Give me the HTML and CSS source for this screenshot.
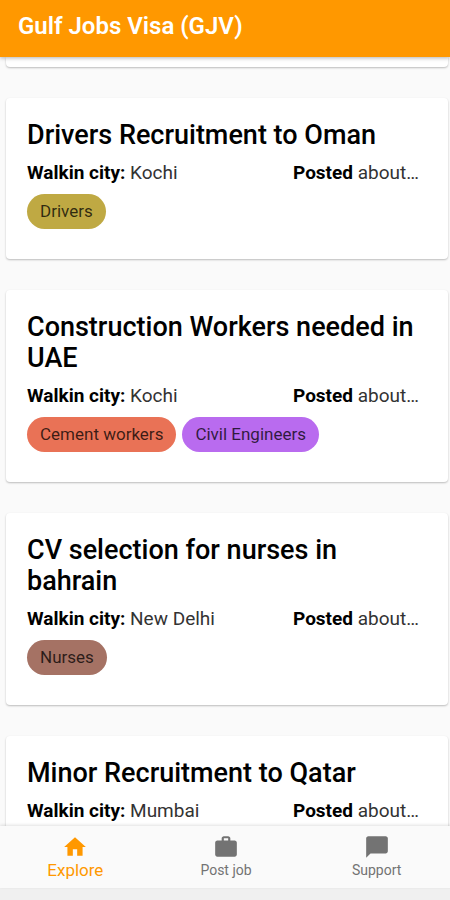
FILE: index.html
```html
<!DOCTYPE html>
<html lang="en">
<head>
<meta charset="utf-8">
<meta name="viewport" content="width=device-width, initial-scale=1">
<title>Gulf Jobs Visa (GJV)</title>
<link rel="stylesheet" href="styles.css">
</head>
<body>
<header class="app-bar"><h1 class="app-title">Gulf Jobs Visa (GJV)</h1></header>
<main class="feed">
  <div class="card card-end"></div>
  <article class="card">
    <h2 class="title">Drivers Recruitment to Oman</h2>
    <div class="meta"><p class="city"><b>Walkin city:</b> Kochi</p><p class="posted"><b>Posted</b> about…</p></div>
    <div class="chips"><span class="chip olive">Drivers</span></div>
  </article>
  <article class="card">
    <h2 class="title">Construction Workers needed in UAE</h2>
    <div class="meta"><p class="city"><b>Walkin city:</b> Kochi</p><p class="posted"><b>Posted</b> about…</p></div>
    <div class="chips"><span class="chip coral">Cement workers</span><span class="chip violet">Civil Engineers</span></div>
  </article>
  <article class="card">
    <h2 class="title">CV selection for nurses in bahrain</h2>
    <div class="meta"><p class="city"><b>Walkin city:</b> New Delhi</p><p class="posted"><b>Posted</b> about…</p></div>
    <div class="chips"><span class="chip brown">Nurses</span></div>
  </article>
  <article class="card">
    <h2 class="title">Minor Recruitment to Qatar</h2>
    <div class="meta"><p class="city"><b>Walkin city:</b> Mumbai</p><p class="posted"><b>Posted</b> about…</p></div>
  </article>
</main>
<nav class="tabs">
  <a class="tab active" href="#explore">
    <svg class="icon" viewBox="0 0 24 24" aria-hidden="true"><path d="M10 20v-6h4v6h5v-8h3L12 3 2 12h3v8z"/></svg>
    <span>Explore</span>
  </a>
  <a class="tab" href="#post">
    <svg class="icon" viewBox="0 0 24 24" aria-hidden="true"><path fill-rule="evenodd" d="M20 6h-4V4c0-1.100-.9-2-2-2h-4C8.900 2 8 2.900 8 4v2H4c-1.100 0-2 .9-2 2v11c0 1.100.9 2 2 2h16c1.100 0 2-.9 2-2V8c0-1.100-.9-2-2-2zM14 6h-4V4h4z"/></svg>
    <span>Post job</span>
  </a>
  <a class="tab" href="#support">
    <svg class="icon" viewBox="0 0 24 24" aria-hidden="true"><path d="M20 2H4c-1.100 0-2 .9-2 2v18l4-4h14c1.100 0 2-.9 2-2V4c0-1.100-.9-2-2-2z"/></svg>
    <span>Support</span>
  </a>
</nav>
<div class="system-bar"></div>
</body>
</html>
```
FILE: styles.css
```css
* { box-sizing: border-box; }
body {
  margin: 0;
  height: 100vh;
  display: flex;
  flex-direction: column;
  overflow: hidden;
  background: #fafafa;
  color: #000;
  font-family: Roboto, sans-serif;
}
h1, h2, p { margin: 0; }
.app-bar {
  flex: none;
  z-index: 1;
  padding: 10px 18px 15px;
  background: #ff9800;
  color: #fff;
  box-shadow: 0 1px 4px rgba(0, 0, 0, .3);
}
.app-title { font-size: 24px; line-height: 32px; font-weight: 600; }
.feed {
  flex: 1;
  min-height: 0;
  overflow: hidden;
  display: flex;
  flex-direction: column;
  gap: 31px;
  padding: 0 2px 0 6px;
}
.card {
  flex: none;
  padding: 22px 24px 30px 21px;
  border-radius: 4px;
  background: #fff;
  box-shadow: 0 1px 2px rgba(0, 0, 0, .25);
}
.card-end { padding: 10px 0 0; border-radius: 0 0 4px 4px; }
.title { font-size: 27px; line-height: 31px; font-weight: 500; }
.meta {
  display: flex;
  justify-content: space-between;
  margin: 11px 0 10px;
  font-size: 19px;
  line-height: 22px;
  font-weight: 400;
  color: #333;
}
.meta b { font-weight: 700; color: #000; }
.posted { flex: 0 0 131px; white-space: nowrap; }
.chips { display: flex; flex-wrap: wrap; gap: 6px; }
.chip {
  padding: 0 13px;
  border-radius: 18px;
  font-size: 17px;
  line-height: 35px;
  color: rgba(0, 0, 0, .75);
}
.olive { background: #bfa943; }
.coral { background: #e97256; }
.violet { background: #b96bef; }
.brown { background: #a57264; }
.tabs {
  flex: none;
  z-index: 1;
  display: flex;
  margin-right: -2px;
  background: #fafafa;
  box-shadow: 0 -1px 3px rgba(0, 0, 0, .12);
}
.tab {
  flex: 1;
  display: flex;
  flex-direction: column;
  align-items: center;
  padding: 8px 0;
  color: #737373;
  font-size: 14px;
  line-height: 20px;
  text-decoration: none;
}
.tab.active { color: #ff9800; font-size: 17px; }
.icon { width: 26px; height: 26px; fill: currentColor; }
.system-bar { flex: none; height: 12px; background: #f0f0f0; }
```
